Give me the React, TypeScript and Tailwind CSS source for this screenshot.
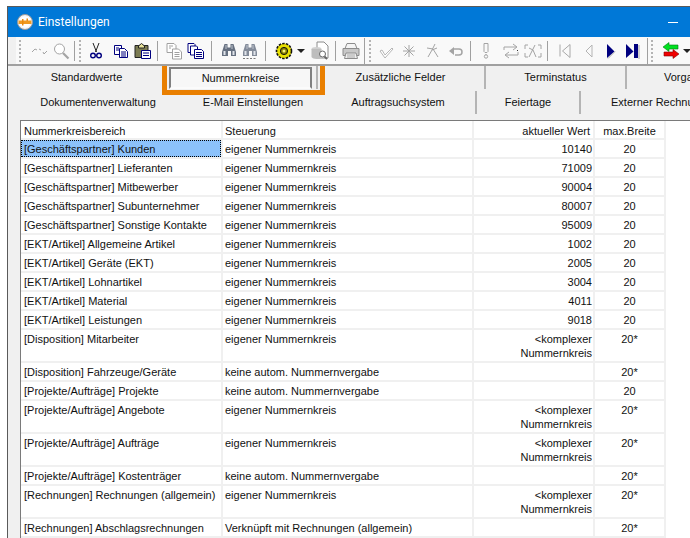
import * as React from 'react'

type Row = { area: string; control: string; value?: string; max: string; complex?: boolean }

const autoOff = 'keine autom. Nummernvergabe'
const own = 'eigener Nummernkreis'

const rows: Row[] = [
  { area: '[Geschäftspartner] Lieferanten', control: own, value: '71009', max: '20' },
  { area: '[Geschäftspartner] Mitbewerber', control: own, value: '90004', max: '20' },
  { area: '[Geschäftspartner] Subunternehmer', control: own, value: '80007', max: '20' },
  { area: '[Geschäftspartner] Sonstige Kontakte', control: own, value: '95009', max: '20' },
  { area: '[EKT/Artikel] Allgemeine Artikel', control: own, value: '1002', max: '20' },
  { area: '[EKT/Artikel] Geräte (EKT)', control: own, value: '2005', max: '20' },
  { area: '[EKT/Artikel] Lohnartikel', control: own, value: '3004', max: '20' },
  { area: '[EKT/Artikel] Material', control: own, value: '4011', max: '20' },
  { area: '[EKT/Artikel] Leistungen', control: own, value: '9018', max: '20' },
  { area: '[Disposition] Mitarbeiter', control: own, max: '20*', complex: true },
  { area: '[Disposition] Fahrzeuge/Geräte', control: autoOff, max: '20*' },
  { area: '[Projekte/Aufträge] Projekte', control: autoOff, max: '20' },
  { area: '[Projekte/Aufträge] Angebote', control: own, max: '20*', complex: true },
  { area: '[Projekte/Aufträge] Aufträge', control: own, max: '20*', complex: true },
  { area: '[Projekte/Aufträge] Kostenträger', control: autoOff, max: '20*' },
  { area: '[Rechnungen] Rechnungen (allgemein)', control: own, max: '20*', complex: true },
  { area: '[Rechnungen] Abschlagsrechnungen', control: 'Verknüpft mit Rechnungen (allgemein)', max: '20*' },
]

function Svg({ children, className = '' }: { children: React.ReactNode; className?: string }) {
  return (
    <svg viewBox="0 0 16 16" fill="none" className={`h-4 w-4 shrink-0 overflow-visible ${className}`}>
      {children}
    </svg>
  )
}

function Sep({ className }: { className: string }) {
  return <div className={`h-[20px] w-px shrink-0 bg-[#a0a0a0] ${className}`} />
}

function Grip({ className }: { className: string }) {
  return (
    <div className={`flex h-[22px] w-1 shrink-0 flex-col justify-between ${className}`}>
      {[0, 1, 2, 3, 4, 5].map((i) => (
        <div key={i} className="h-0.5 w-0.5 bg-[#b4b4b4]" />
      ))}
    </div>
  )
}

function Binoculars({ color, dots }: { color: string; dots?: boolean }) {
  return (
    <Svg>
      <path d="M3.500 1h3v3.500h3V1h3l2.500 8v4h-5V8h-3v5H1V9z" fill={color} />
      <path d="M2.500 8h2v4h-2zM11.500 8h2v4h-2z" fill="#dfe3ea" />
      <path d="M4.500 2h1v4h-1zM10.500 2h1v4h-1z" fill="#c0c6d0" />
      {dots && <path d="M1 15.500h14" stroke="#777" strokeDasharray="2 1.500" />}
    </Svg>
  )
}

function Toolbar() {
  const g = '#a4a4a4'
  return (
    <div className="flex h-[27px] items-center overflow-hidden border-l-[8px] border-[#f0f0f0] bg-[#f9f9f9]">
      <Grip className="ml-[3px]" />
      <div className="ml-[9px]">
        <Svg>
          <path d="M0 9l3-3 2 1M7 6l2 1M11 9l1 2 3-3" stroke={g} />
        </Svg>
      </div>
      <div className="ml-[5px]">
        <Svg>
          <circle cx="6.500" cy="6" r="5" stroke={g} fill="#fff" />
          <path d="M10 10l5.500 5.500" stroke={g} strokeWidth="2.200" />
        </Svg>
      </div>
      <Sep className="ml-[5px]" />
      <Grip className="ml-1" />
      <div className="ml-[5px]">
        <Svg>
          <path d="M5 0l3.500 9M11 0L7.500 9" stroke="#222" />
          <circle cx="5" cy="12.500" r="2.300" stroke="#00007f" strokeWidth="1.400" />
          <circle cx="11" cy="12.500" r="2.300" stroke="#00007f" strokeWidth="1.400" />
        </Svg>
      </div>
      <div className="ml-[9px]">
        <Svg>
          <path d="M1.500 2.500h7v9h-7z" fill="#fff" stroke="#00007f" />
          <path d="M6.500 5.500h5l3 3v6h-8z" fill="#fff" stroke="#00007f" />
          <path d="M3 5h3M3 7h3M8 9h5M8 11h5M8 13h5" stroke="#00007f" />
        </Svg>
      </div>
      <div className="ml-[6px]">
        <Svg>
          <path d="M0 2.500h13v12H0z" fill="#7b7b52" stroke="#222" />
          <path d="M3.500 3l3-2.500L9.500 3v2h-6z" fill="#e8e29a" stroke="#222" />
          <path d="M6.500 7.500h9v8h-9z" fill="#fff" stroke="#00007f" />
          <path d="M8 10h6M8 12.500h6" stroke="#00007f" />
        </Svg>
      </div>
      <Sep className="ml-[6px]" />
      <div className="ml-[9px]">
        <Svg>
          <path d="M0 .5h7l2 2v7H0z" fill="#fff" stroke="#a0a0a0" />
          <path d="M5.500 6h6l3 3v7h-9z" fill="#fff" stroke="#a0a0a0" />
          <path d="M2 3h4M2 5h2M7.500 9.500h5M7.500 11.500h5M7.500 13.500h5" stroke="#a0a0a0" />
        </Svg>
      </div>
      <div className="ml-[5px]">
        <Svg>
          <path d="M0 .5h6l1 1v8H0z" fill="#fff" stroke="#00007f" />
          <path d="M2.500 3h6l1 1v8h-7z" fill="#fff" stroke="#00007f" />
          <path d="M6.500 6.500h7l2 2v7h-9z" fill="#fff" stroke="#00007f" />
          <path d="M8 9.500h6M8 11.500h6M8 13.500h6" stroke="#00007f" />
        </Svg>
      </div>
      <Sep className="ml-[7px]" />
      <div className="ml-[9px]">
        <Binoculars color="#667080" />
      </div>
      <div className="ml-[5px]">
        <Binoculars color="#838b99" dots />
      </div>
      <Sep className="ml-[7px]" />
      <div className="ml-[10px]">
        <Svg>
          <circle cx="8" cy="8" r="7.500" fill="#e8e000" stroke="#111" strokeWidth="1.600" strokeDasharray="2.500 1.200" />
          <circle cx="8" cy="8" r="5.500" fill="#e8e000" />
          <circle cx="8" cy="8" r="3.600" fill="#8a8200" stroke="#111" />
          <circle cx="8" cy="8" r="1.500" fill="#f6f080" />
        </Svg>
      </div>
      <svg viewBox="0 0 8 4" className="ml-[5px] h-1 w-2 shrink-0">
        <path d="M0 0h8L4 4z" fill="#222" />
      </svg>
      <div className="ml-[7px]">
        <Svg>
          <path d="M5 -1h7l4 4v12H5z" fill="#fff" stroke="#8c8c8c" />
          <ellipse cx="4.500" cy="6" rx="5" ry="2" fill="#cfcfcf" />
          <path d="M-.5 6v8c1 2.500 9 2.500 10 0V6z" fill="#bdbdbd" />
          <circle cx="10.500" cy="11" r="3" stroke="#666" fill="#fff" />
          <path d="M12.500 13.500l2.500 2.500" stroke="#666" strokeWidth="1.800" />
        </Svg>
      </div>
      <Sep className="ml-[7px]" />
      <div className="ml-[7px]">
        <Svg>
          <path d="M4 .5h8l2 5H2z" fill="#f4f4f4" stroke="#8c8c8c" />
          <path d="M0 5.500h16v7H0z" fill="#c8c8c8" stroke="#8c8c8c" />
          <path d="M3 10h10l1.500 5.500h-13z" fill="#efefef" stroke="#8c8c8c" />
          <path d="M4 12h8M4 14h8" stroke="#a8a8a8" />
        </Svg>
      </div>
      <div className="ml-[5px] h-[26px] w-px shrink-0 bg-[#a0a0a0]" />
      <Grip className="ml-1" />
      <div className="ml-[6px]">
        <Svg>
          <path d="M1 8l2-1 3 5 7-7 1 1-8 9z" fill="#fff" stroke={g} strokeWidth=".8" />
        </Svg>
      </div>
      <div className="ml-[6px]">
        <Svg>
          <path d="M8 2v12M2 8h12M3.500 3.500l9 9M12.500 3.500l-9 9" stroke={g} />
        </Svg>
      </div>
      <div className="ml-[8px]">
        <Svg>
          <path d="M10 1L7 7l-4 7M2 5l6 1 5 8M7 7l5-2" stroke={g} />
        </Svg>
      </div>
      <div className="ml-[7px]">
        <Svg>
          <path d="M6 6h5c4 0 4 6 0 6H7" stroke={g} strokeWidth="1.500" />
          <path d="M1 8l5-4v8z" fill={g} />
        </Svg>
      </div>
      <Sep className="ml-[6px]" />
      <div className="ml-[8px]">
        <Svg>
          <path d="M5 .5h4v8l-1 1H6l-1-1zM7 11v1" stroke={g} />
          <circle cx="7" cy="13.500" r="1.700" stroke={g} />
        </Svg>
      </div>
      <div className="ml-[8px]">
        <Svg>
          <path d="M1 7V4h12M10 1l4 3-4 3M15 9v3H3M6 9l-4 3 4 3" stroke={g} />
          <path d="M14 7h1v1h-1z" fill="#333" />
        </Svg>
      </div>
      <div className="ml-[6px]">
        <Svg>
          <path d="M3 2H0v4M0 10v4h3M13 2h3v4M16 10v4h-3" stroke={g} />
          <path d="M10 2L7 8l-3 6M4 5l4 2 3 7" stroke={g} />
        </Svg>
      </div>
      <Sep className="ml-[6px]" />
      <div className="ml-[9px]">
        <Svg>
          <path d="M3 1.500v12M13 1.500L5.500 8l7.500 6.500z" stroke="#a8a8a8" />
        </Svg>
      </div>
      <div className="ml-[8px]">
        <Svg>
          <path d="M11 2L5 8l6 6z" stroke="#b4b4b4" />
        </Svg>
      </div>
      <div className="ml-[6px]">
        <Svg>
          <path d="M4 1l7.500 7.500L4 15z" fill="#00007f" />
          <path d="M5 15.500l7-7" stroke="#a8a8a8" />
        </Svg>
      </div>
      <div className="ml-[6px]">
        <Svg>
          <path d="M1 1l7.500 7.500L1 15z" fill="#00007f" />
          <path d="M9 1h4v14H9z" fill="#00007f" />
          <path d="M14 2v14" stroke="#a8a8a8" />
        </Svg>
      </div>
      <div className="ml-[6px] h-[26px] w-px shrink-0 bg-[#a0a0a0]" />
      <Grip className="ml-[3px]" />
      <div className="ml-[8px]">
        <Svg>
          <path d="M0 4l6-4.500V2h9v4H6v2.500z" fill="#00e020" stroke="#007a10" strokeWidth=".6" />
          <path d="M16 11l-6-4.500V9H1v4h9v2.500z" fill="#f00000" stroke="#800000" strokeWidth=".6" />
        </Svg>
      </div>
      <svg viewBox="0 0 8 4" className="ml-1 h-1 w-2 shrink-0">
        <path d="M0 0h8L4 4z" fill="#222" />
      </svg>
    </div>
  )
}

function Tab({ label, className, divider = true }: { label: string; className: string; divider?: boolean }) {
  return (
    <div className={`flex h-[23px] shrink-0 items-center justify-center whitespace-nowrap ${divider ? 'border-r-2 border-[#b4b4b4]' : ''} ${className}`}>
      {label}
    </div>
  )
}

function Tabs() {
  return (
    <div className="relative h-[54px] shrink-0 overflow-hidden bg-[#f0f0f0] text-[11px] text-[#111]">
      <div className="flex h-[23px]">
        <Tab label="Standardwerte" className="w-[157px]" divider={false} />
        <div className="mt-px ml-1 flex h-[22px] w-[143px] shrink-0 items-center justify-center border-2 border-[#808080] border-b-[#fbfbfb] bg-[#f7f7f7]">
          Nummernkreise
        </div>
        <div className="ml-1 h-[23px] w-0.5 shrink-0 bg-[#b4b4b4]" />
        <Tab label="Zusätzliche Felder" className="w-[168px] pr-px" />
        <Tab label="Terminstatus" className="w-[141px]" />
        <Tab label="Vorgangsarten" className="w-[120px] justify-start pl-[37px]" divider={false} />
      </div>
      <div className="mt-0.5 flex h-[23px]">
        <Tab label="Dokumentenverwaltung" className="w-[180px]" divider={false} />
        <Tab label="E-Mail Einstellungen" className="w-[130px]" divider={false} />
        <Tab label="Auftragsuchsystem" className="w-[159px] pl-[3px]" />
        <Tab label="Feiertage" className="w-[104px]" />
        <Tab label="Externer Rechnungsimport" className="w-[150px] justify-start pl-[30px]" divider={false} />
      </div>
      {/* Orange Markierung im Screenshot */}
      <div className="absolute top-[-6px] left-[154px] h-[35px] w-[163px] border-[5px] border-[#e97f00]" />
    </div>
  )
}

function GridRow({ children }: { children: React.ReactNode }) {
  return (
    <div className="grid w-[645px] grid-cols-[202px_251px_121px_71px] border-b-2 border-[#f0f0f0] text-[11px] leading-[14px] text-[#111]">
      {children}
    </div>
  )
}

function Cell({ children, className = '' }: { children?: React.ReactNode; className?: string }) {
  return <div className={`border-r-2 border-[#f0f0f0] pt-0.5 pb-px ${className}`}>{children}</div>
}

function HeadCell({ children, className = '' }: { children: React.ReactNode; className?: string }) {
  return <div className={`h-[17px] border-r-2 border-[#f0f0f0] pt-[3px] ${className}`}>{children}</div>
}

export default function App() {
  return (
    <div className="h-[538px] w-[690px] overflow-hidden bg-white pt-1.5 pl-[7px] [font-family:'Liberation_Sans',Arial,sans-serif]">
      <div className="flex h-[532px] flex-col border-t border-l border-[#5a5a5a]">
        <div className="flex h-[30px] shrink-0 items-center bg-[#0078d7] pl-[9px] text-white">
          <svg viewBox="0 0 16 16" className="h-4 w-4 shrink-0">
            <circle cx="8" cy="8" r="7.500" fill="#f4f4f4" stroke="#9a9a9a" />
            <circle cx="8" cy="8" r="5.800" fill="#fff" />
            <path d="M1.500 6.500h13v3.500h-13z" fill="#f09a20" />
            <path d="M5 5h1.500v6.500H5zM9.500 4.500H11V7H9.500z" fill="#e88a10" />
          </svg>
          <span className="ml-[5px] text-[12px] [font-family:'Roboto',sans-serif]">Einstellungen</span>
          <div className="ml-[558px] h-px w-[10px] bg-white" />
        </div>
        <Toolbar />
        <div className="h-0.5 shrink-0 bg-[#a0a0a0]" />
        <Tabs />
        <div className="flex min-h-0 flex-1 bg-[#f0f0f0] pl-3">
          <div className="flex-1 overflow-hidden border-t border-l border-[#7a7a7a] bg-white">
            <GridRow>
              <HeadCell className="pl-[3px]">Nummerkreisbereich</HeadCell>
              <HeadCell className="pl-0.5">Steuerung</HeadCell>
              <HeadCell className="pr-[3px] text-right">aktueller Wert</HeadCell>
              <HeadCell className="text-center">max.Breite</HeadCell>
            </GridRow>
            <GridRow>
              <div className="h-[17px] border-r-2 border-[#f0f0f0]">
                <div className="h-[17px] border border-dotted border-black bg-[#8cc2fb] px-0.5 pt-px">[Geschäftspartner] Kunden</div>
              </div>
              <Cell className="pl-0.5">{own}</Cell>
              <Cell className="pr-px text-right">10140</Cell>
              <Cell className="text-center">20</Cell>
            </GridRow>
            {rows.map((row) => (
              <GridRow key={row.area}>
                <Cell className="pl-[3px]">{row.area}</Cell>
                <Cell className="pl-0.5">{row.control}</Cell>
                <Cell className="pr-px text-right">
                  {row.complex ? (
                    <>
                      &lt;komplexer
                      <br />
                      Nummernkreis
                    </>
                  ) : (
                    row.value
                  )}
                </Cell>
                <Cell className="text-center">{row.max}</Cell>
              </GridRow>
            ))}
          </div>
        </div>
      </div>
    </div>
  )
}
